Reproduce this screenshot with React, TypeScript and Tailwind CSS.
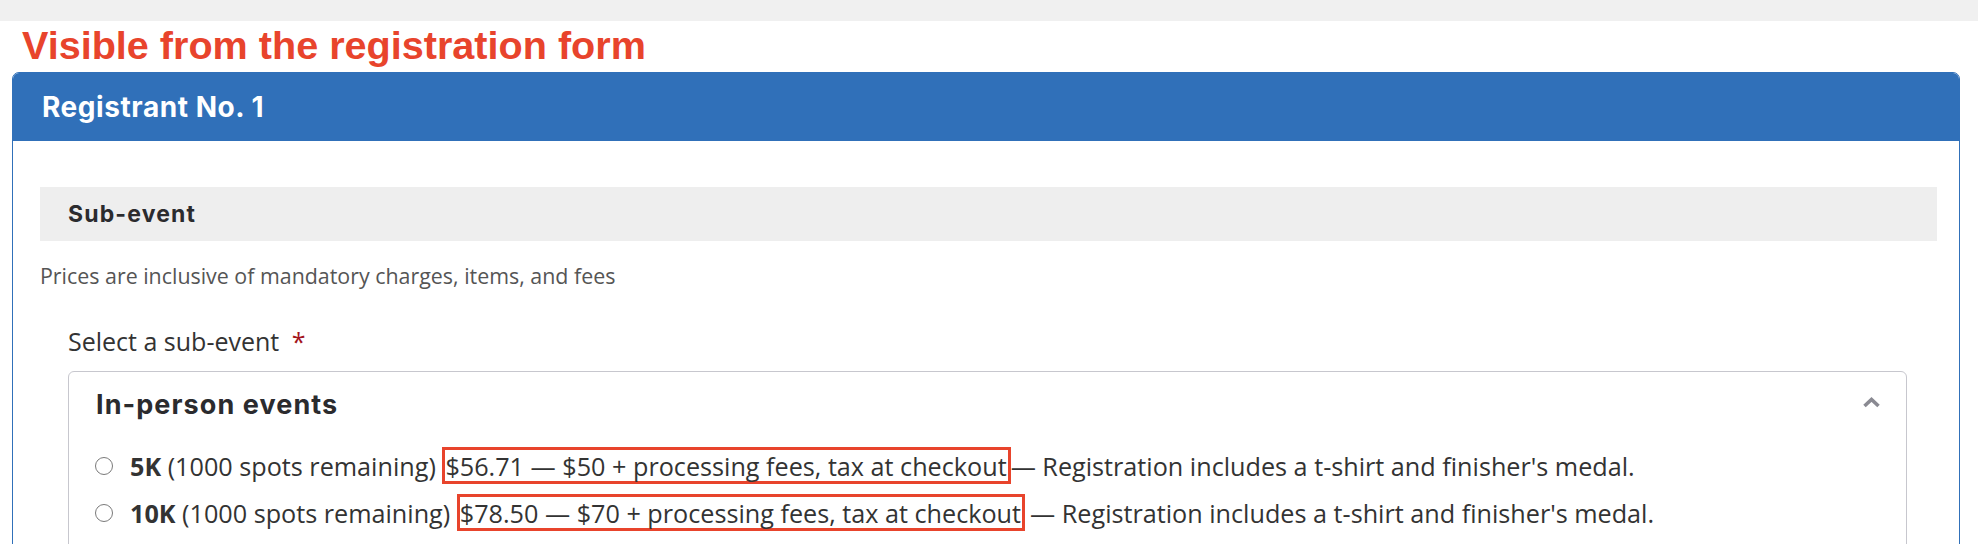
import { Fragment } from 'react'

const options = [
  {
    name: '5K',
    price: '$56.71 — $50 + processing fees, tax at checkout',
    gap: false,
  },
  {
    name: '10K',
    price: '$78.50 — $70 + processing fees, tax at checkout',
    gap: true,
  },
]

function App() {
  return (
    <div className="min-h-[544px] w-full bg-white font-['Open_Sans',sans-serif] text-[#333]">
      <div className="h-[21px] bg-[#f0f0f0]" />
      <h1 className="mt-[4px] pl-[22px] font-['Liberation_Sans',Arial,sans-serif] text-[39.6px] leading-[40px] font-bold text-[#e8442c]">
        Visible from the registration form
      </h1>

      <div className="mt-[7px] ml-[12px] mr-[18px] rounded-t-[7px] border border-[#3070b9]">
        <div className="flex h-[68px] items-center rounded-t-[6px] bg-[#3070b9] px-[29px]">
          <h2 className="font-['Inter',sans-serif] text-[28px] font-bold tracking-[0.02em] text-white">Registrant No. 1</h2>
        </div>

        <div className="pt-[46px] pl-[27px] pr-[22px]">
          <div className="flex h-[54px] items-center bg-[#eeeeee] pl-[28px]">
            <h3 className="font-['Inter',sans-serif] text-[23px] font-bold tracking-[0.05em] text-[#2b2b2e]">Sub-event</h3>
          </div>

          <p className="mt-[19px] text-[21.4px] leading-[31.5px] text-[#555]">
            Prices are inclusive of mandatory charges, items, and fees
          </p>

          <div className="mt-[31px] ml-[28px] mr-[30px]">
            <div className="text-[25px] leading-[36px] font-medium text-[#333]">
              Select a sub-event <span className="ml-[6px] text-[#a3141c]">*</span>
            </div>

            <div className="mt-[12px] rounded-[6px] border border-[#c7c7ce] pt-[15px] pb-[40px]">
              <div className="flex items-center justify-between pl-[27px] pr-[25px]">
                <h4 className="font-['Inter',sans-serif] text-[27px] leading-[36px] font-bold tracking-[0.04em] text-[#2b2b2e]">
                  In-person events
                </h4>
                <svg width="19" height="12" viewBox="0 0 19 12" className="mb-[6px]">
                  <path d="M2.5 10 L9.5 3.5 L16.5 10" fill="none" stroke="#8a8a92" strokeWidth="3.6" />
                </svg>
              </div>

              <div className="mt-[25px] flex flex-col gap-[11px] pl-[26px]">
                {options.map((o) => (
                  <div key={o.name} className="flex h-[36px] items-center text-[25.2px] leading-[36px] whitespace-nowrap text-[#333]">
                    <span className="mr-[17px] h-[18px] w-[18px] shrink-0 rounded-full border-[1.5px] border-[#7a7a7a] bg-white" />
                    <b className="font-bold">{o.name}</b>
                    <span>&nbsp;(1000 spots remaining)&nbsp;</span>
                    <span className="inline-flex h-[37px] items-center border-[3px] border-[#e8442c] pl-[0px] pr-[1px]">
                      {o.price}
                    </span>
                    <Fragment>
                      <span className={o.gap ? 'ml-[5px]' : ''}>— Registration includes a t-shirt and finisher's medal.</span>
                    </Fragment>
                  </div>
                ))}
              </div>
            </div>
          </div>
        </div>
      </div>
    </div>
  )
}

export default App
